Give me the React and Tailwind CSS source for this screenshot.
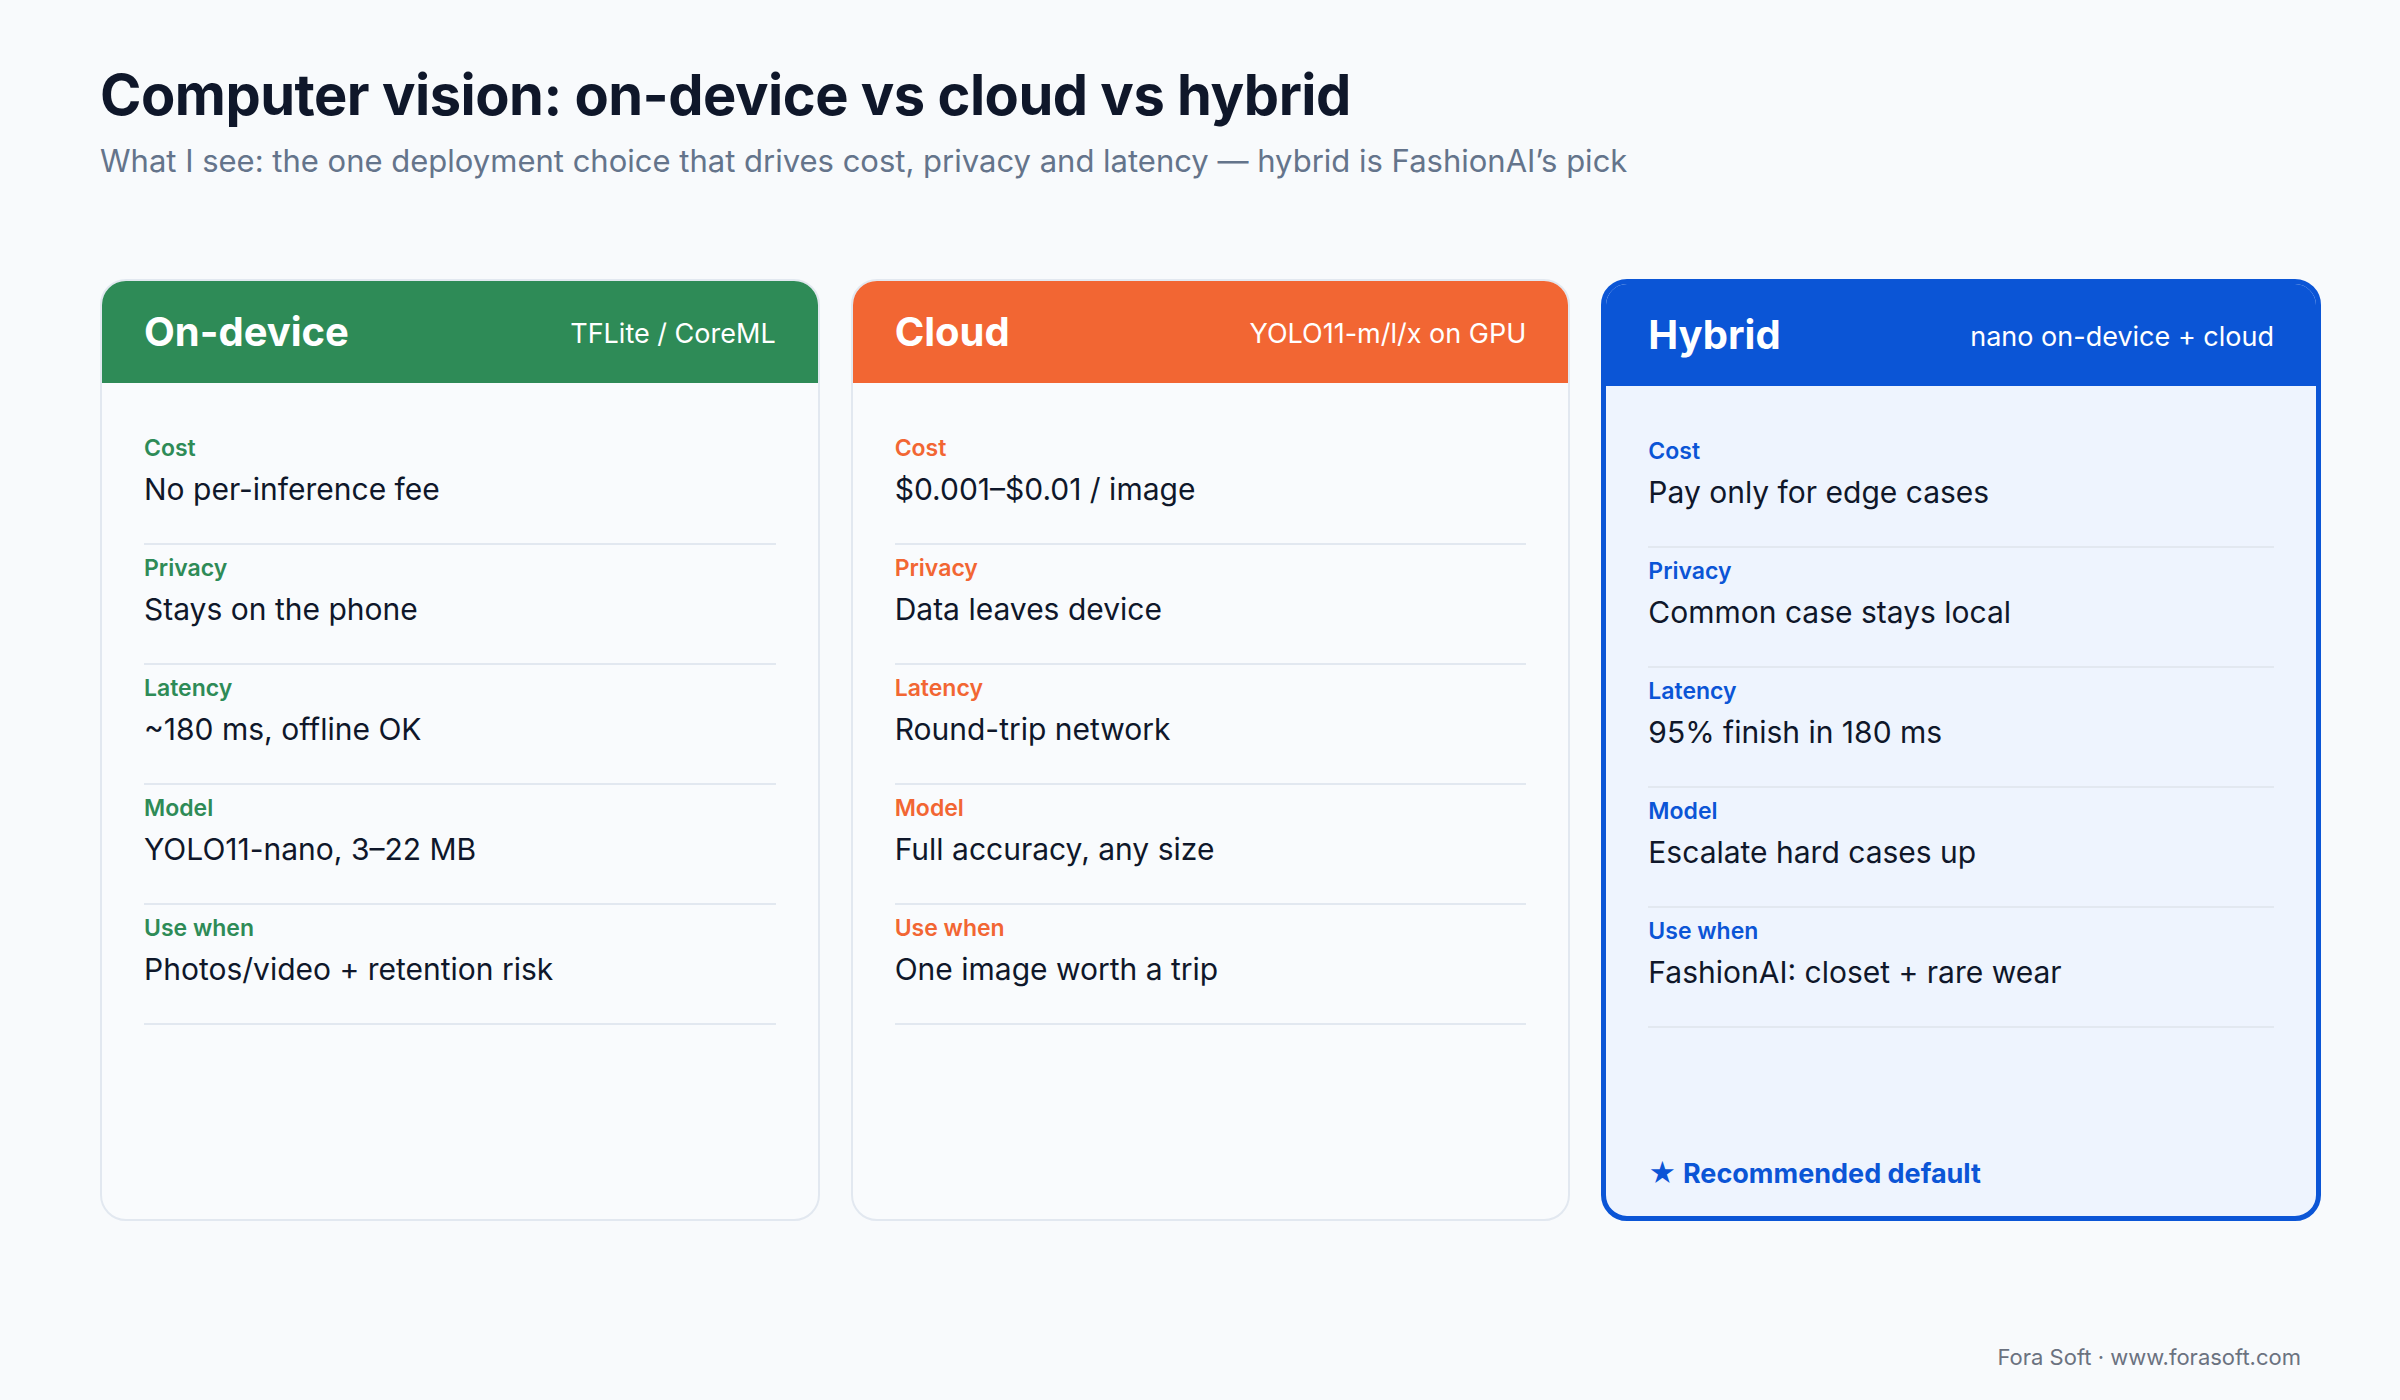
import React from 'react'

const cards = [
    {
        title: 'On-device', sub: 'TFLite / CoreML', head: 'bg-[#2e8b57]', label: 'text-[#2e8b57]',
        box: 'border-2 border-[#e2e8f0] bg-[#f9fbfd]',
        rows: [['Cost', 'No per-inference fee'], ['Privacy', 'Stays on the phone'], ['Latency', '~180 ms, offline OK'], ['Model', 'YOLO11-nano, 3–22 MB'], ['Use when', 'Photos/video + retention risk']],
    },
    {
        title: 'Cloud', sub: 'YOLO11-m/l/x on GPU', head: 'bg-[#f26633]', label: 'text-[#f26633]',
        box: 'border-2 border-[#e2e8f0] bg-[#f9fbfd]',
        rows: [['Cost', '$0.001–$0.01 / image'], ['Privacy', 'Data leaves device'], ['Latency', 'Round-trip network'], ['Model', 'Full accuracy, any size'], ['Use when', 'One image worth a trip']],
    },
    {
        title: 'Hybrid', sub: 'nano on-device + cloud', head: 'bg-[#0b55d6]', label: 'text-[#0b55d6]',
        box: 'border-[5px] border-[#0b55d6] bg-[#eef4fe]', rec: true,
        rows: [['Cost', 'Pay only for edge cases'], ['Privacy', 'Common case stays local'], ['Latency', '95% finish in 180 ms'], ['Model', 'Escalate hard cases up'], ['Use when', 'FashionAI: closet + rare wear']],
    },
]

const App = () => {
    return (
        <div className="w-[2400px] h-[1400px] bg-[#f8fafc] flex flex-col pl-[100px] pt-[60px] font-[Inter,sans-serif] text-[#0f172a]">
            <h1 className="text-[56px] font-bold leading-[70px] tracking-[-0.5px]">Computer vision: on-device vs cloud vs hybrid</h1>
            <p className="text-[31px] text-[#64748b] leading-[40px] mt-[11px]">What I see: the one deployment choice that drives cost, privacy and latency — hybrid is FashionAI’s pick</p>
            <div className="grid grid-cols-3 gap-[31px] mt-[98px] h-[942px] w-[2221px]">
                {cards.map((c) => (
                    <div key={c.title} className={`rounded-[26px] overflow-hidden flex flex-col ${c.box}`}>
                        <div className={`h-[102px] shrink-0 flex items-center justify-between px-[42px] text-white ${c.head}`}>
                            <span className="text-[40px] font-bold">{c.title}</span>
                            <span className="text-[27px] mt-[4px]">{c.sub}</span>
                        </div>
                        <div className="flex flex-col flex-1 px-[42px] pt-[44px] pb-[22px]">
                            {c.rows.map(([k, v]) => (
                                <div key={k} className="border-b-2 border-[#e2e8f0] pt-[6px] pb-[34px] mb-[2px]">
                                    <div className={`text-[23px] font-semibold leading-[30px] ${c.label}`}>{k}</div>
                                    <div className="text-[30px] leading-[40px] mt-[6px]">{v}</div>
                                </div>
                            ))}
                            <div className="flex-1" />
                            {c.rec && <div className="text-[27px] font-bold text-[#0b55d6]">★ Recommended default</div>}
                        </div>
                    </div>
                ))}
            </div>
            <div className="text-right text-[22px] text-[#6b7280] mt-[120px] w-[2201px]">Fora Soft · www.forasoft.com</div>
        </div>
    )
}

export default App
